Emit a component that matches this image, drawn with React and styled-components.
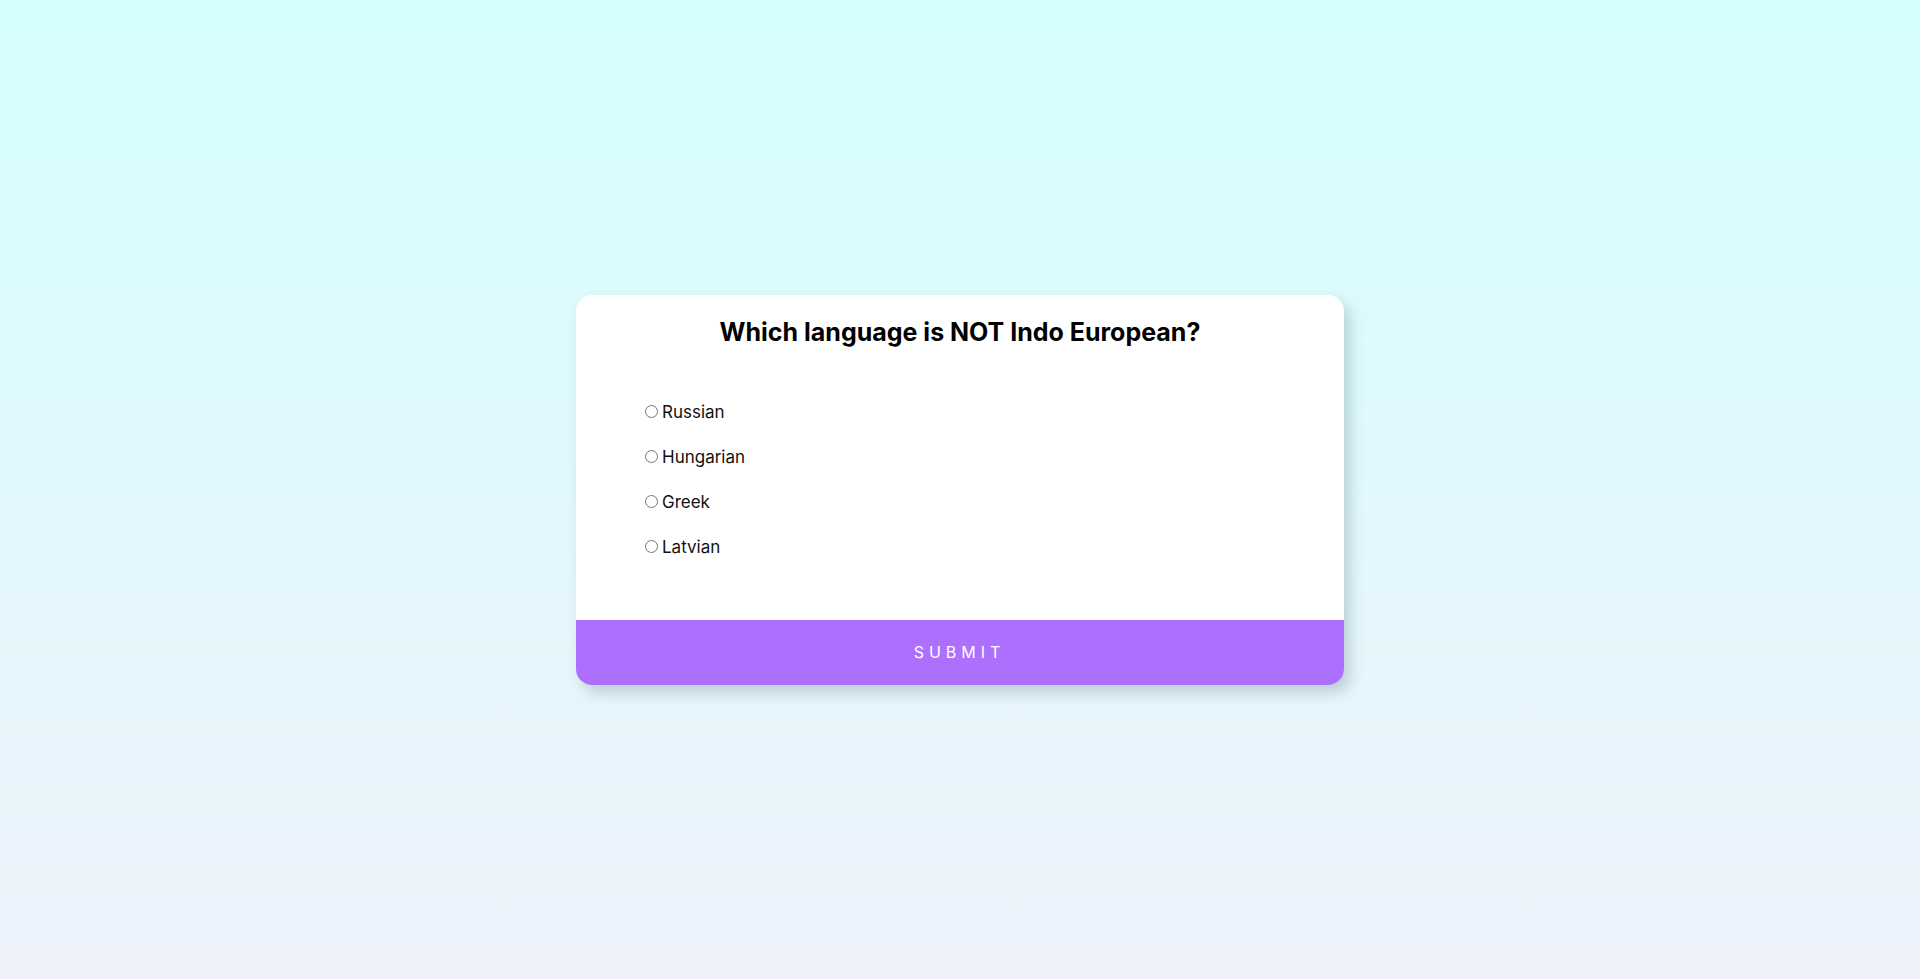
import React from 'react';
import styled, { createGlobalStyle } from 'styled-components';

const GlobalStyle = createGlobalStyle`
  * {
    box-sizing: border-box;
  }
  html, body {
    margin: 0;
    height: 100%;
  }
  body {
    font-family: 'Inter', 'Liberation Sans', sans-serif;
    background: linear-gradient(180deg, #d4fefd 0%, #eef2fb 100%);
    min-height: 979px;
  }
`;

const Page = styled.div`
  height: 979px;
  display: flex;
  align-items: center;
  justify-content: center;
`;

const QuizCard = styled.div`
  width: 768px;
  background: white;
  border-radius: 16px;
  overflow: hidden;
  box-shadow: 6px 8px 14px rgba(60, 90, 100, 0.24);
`;

const QuizHeader = styled.div`
  padding: 20px 64px 60px;
`;

const Question = styled.h2`
  margin: 0;
  text-align: center;
  font-size: 25px;
  line-height: 34px;
  font-weight: 700;
  color: #000;
`;

const Options = styled.ul`
  list-style: none;
  padding: 0;
  margin: 50px 0 0;
  display: flex;
  flex-direction: column;
  gap: 19px;
`;

const Option = styled.li`
  display: flex;
  align-items: center;
  height: 26px;
  font-size: 17px;
  color: #111;

  input {
    margin: 0 4px 0 5px;
    width: 13px;
    height: 13px;
  }
`;

const SubmitButton = styled.button`
  display: block;
  width: 100%;
  height: 65px;
  border: none;
  background: #ad70fe;
  color: white;
  font-family: inherit;
  font-size: 16px;
  letter-spacing: 5px;
  padding-left: 5px;
  cursor: pointer;
`;

const answers = ['Russian', 'Hungarian', 'Greek', 'Latvian'];

const App = () => {
  return (
    <Page>
      <GlobalStyle />
      <QuizCard>
        <QuizHeader>
          <Question>Which language is NOT Indo European?</Question>
          <Options>
            {answers.map((a) => (
              <Option key={a}>
                <input type="radio" name="answer" id={a} />
                <label htmlFor={a}>{a}</label>
              </Option>
            ))}
          </Options>
        </QuizHeader>
        <SubmitButton>SUBMIT</SubmitButton>
      </QuizCard>
    </Page>
  );
};

export default App;
